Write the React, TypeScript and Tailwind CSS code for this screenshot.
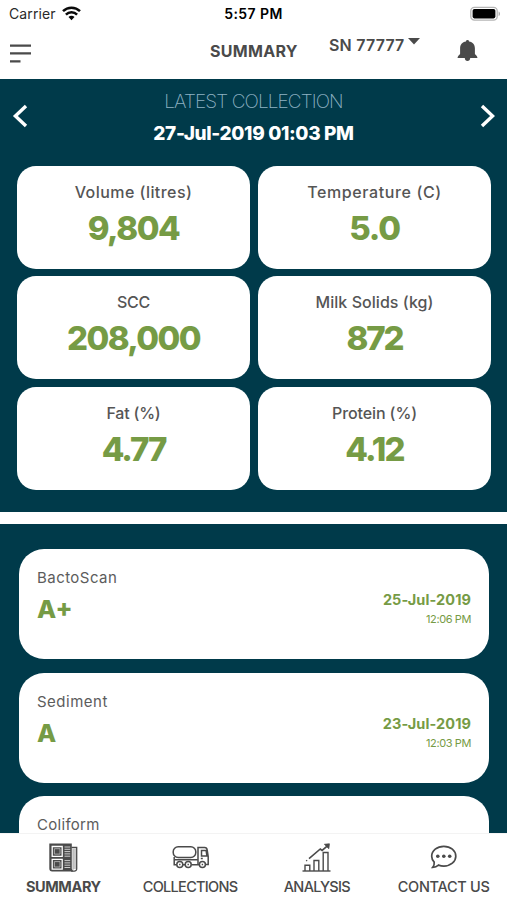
import type { ReactNode } from 'react';

type Metric = { label: string; value: string; labelClass: string; valueClass: string };
type TestResult = { label: string; grade?: string; date?: string; time?: string; labelClass: string };
type Tab = { label: string; icon: ReactNode; className: string };

const metrics: Metric[] = [
  { label: 'Volume (litres)', value: '9,804', labelClass: 'tracking-[0.45px]', valueClass: 'tracking-[-1.5px]' },
  { label: 'Temperature (C)', value: '5.0', labelClass: 'tracking-[0.6px]', valueClass: 'tracking-[-1.3px]' },
  { label: 'SCC', value: '208,000', labelClass: 'tracking-[-0.2px]', valueClass: 'tracking-[-1.6px]' },
  { label: 'Milk Solids (kg)', value: '872', labelClass: 'tracking-[0.05px]', valueClass: 'tracking-[-2.2px]' },
  { label: 'Fat (%)', value: '4.77', labelClass: 'tracking-[-0.2px]', valueClass: 'tracking-[-2px]' },
  { label: 'Protein (%)', value: '4.12', labelClass: 'tracking-[-0.1px]', valueClass: 'tracking-[-1.8px]' },
];

// Coliform has no reading yet, so only its label is shown
const results: TestResult[] = [
  { label: 'BactoScan', grade: 'A+', date: '25-Jul-2019', time: '12:06 PM', labelClass: 'tracking-[0.45px]' },
  { label: 'Sediment', grade: 'A', date: '23-Jul-2019', time: '12:03 PM', labelClass: 'tracking-[0.5px]' },
  { label: 'Coliform', labelClass: 'tracking-[0.3px]' },
];

function WifiIcon() {
  return (
    <svg className="h-[15px] w-[19px]" viewBox="0 0 19 15" fill="none" stroke="#0a0a0a" strokeWidth="2.5">
      <path d="M1 5.200a12.200 12.200 0 0 1 17 0" />
      <path d="M3.900 8.600a7.900 7.900 0 0 1 11.200 0" />
      <path d="M6.500 11.100a4.200 4.200 0 0 1 6 0l-3 3.100z" fill="#0a0a0a" stroke="none" />
    </svg>
  );
}

function BatteryIcon() {
  return (
    <svg className="h-[16px] w-[31px]" viewBox="0 0 31 16">
      <rect x="0.8" y="1.3" width="26.4" height="12.8" rx="3.6" fill="#fff" stroke="#b5b5b5" strokeWidth="1.3" />
      <rect x="2.6" y="3" width="22.8" height="9.4" rx="1.8" fill="#000" />
      <path d="M28.6 5.4c1.8.7 1.8 3.9 0 4.600z" fill="#a8a8a8" />
    </svg>
  );
}

function BellIcon() {
  return (
    <svg className="h-[22px] w-[21px]" viewBox="0 0 21 22" fill="#4a4a4a">
      <path d="M9 1.400a1.500 1.300 0 0 1 3 0C15.900 1.900 17.900 4.600 17.900 8.200v5.600c0 1 2.500 1.700 2.600 4.200H.5c.1-2.500 2.600-3.200 2.600-4.200V8.200c0-3.600 2-6.300 5.900-6.800z" />
      <path d="M7.800 18h5.400c0 1.800-1.200 3-2.700 3s-2.700-1.200-2.700-3z" />
    </svg>
  );
}

function SummaryIcon() {
  return (
    <svg className="h-[29px] w-[29px]" viewBox="0 0 29 29" fill="none">
      <path d="M22.5 4.5h5.2v21.2a2.3 2.3 0 0 1-2.6 2.4h-3" stroke="#4a4a4a" strokeWidth="1.3" />
      <path d="M24.1 6v20.5M26 6v20" stroke="#777" strokeWidth="0.8" />
      <path d="M0.3 0.5h22.5v25.3l1.6 2.700H3.2a2.9 2.9 0 0 1-2.9-2.900z" fill="#4a4a4a" />
      <path d="M3.200 3.500h10v9.800h-10zM3.200 16.400h10v9.800h-10z" stroke="#fff" strokeWidth="1.300" />
      <path d="M5.400 5.700H11v5.400H5.400zM5.400 18.600H11V24H5.400z" stroke="#bbb" strokeWidth="0.8" />
      <path d="M15.500 4h5.700M15.500 6.300h5.700M15.500 8.600h5.700M15.500 10.900h5.700M15.500 13.200h5.700M15.500 17.600h5.700M15.500 19.900h5.700M15.500 22.200h5.700M15.500 24.500h5.700" stroke="#ccc" strokeWidth="1" />
    </svg>
  );
}

function TankerIcon() {
  return (
    <svg className="h-[24px] w-[37px]" viewBox="0 0 37 24" fill="none" stroke="#4a4a4a" strokeWidth="1.500">
      <rect x="1.2" y="1.8" width="22.6" height="10.6" rx="5" />
      <path d="M26 19V2.600h6.700c1.700 0 2.300.9 2.500 2.400l1 6.600v8h-2.400M29.500 5.400h4.600l.8 5.600h-5.400z" />
      <path d="M2.200 12v2.700h23.600M2.200 14.700v5h2.500M11 19.700h2.200M19.500 19.700h7.600M28.800 13.500h2" />
      <circle cx="7.8" cy="19.4" r="3" />
      <circle cx="16.2" cy="19.4" r="3" />
      <circle cx="30.4" cy="19.4" r="3" />
      <path d="M7.100 19.400h1.400M15.500 19.400h1.400M29.700 19.400h1.400" />
    </svg>
  );
}

function AnalysisIcon() {
  return (
    <svg className="h-[29px] w-[29px]" viewBox="0 0 29 29" fill="none" stroke="#4a4a4a" strokeWidth="1.400">
      <path d="M.5 28h28" />
      <path d="M3 28v-5.700h4.800V28M12 28V17.500h4.800V28M21.200 28V9.500H26V28" />
      <path d="M7 15.600 18.300 6l1.800 1.400 5.600-4.800" strokeWidth="1.600" />
      <path d="m4.200 18 .9-.8" />
      <path d="m22.400 1.300 5-.5-.6 4.900z" fill="#4a4a4a" strokeWidth="0.8" />
    </svg>
  );
}

function ChatIcon() {
  return (
    <svg className="h-[24px] w-[27px]" viewBox="0 0 27 24" fill="none" stroke="#4a4a4a" strokeWidth="1.700">
      <path d="M13.800 1.300c6.800 0 12 4.400 12 9.900s-5.200 9.900-12 9.900c-1.900 0-3.700-.4-5.300-1-1.500 1.400-3.500 2.200-5.800 2.200 1.100-1.300 1.800-2.900 1.500-5.100-1.600-1.700-2.500-3.800-2.500-6 0-5.500 5.300-9.900 12.100-9.900z" />
      <g fill="#4a4a4a" stroke="none">
        <circle cx="7.8" cy="11.3" r="1.8" />
        <circle cx="13.8" cy="11.3" r="1.8" />
        <circle cx="19.7" cy="11.3" r="1.8" />
      </g>
    </svg>
  );
}

const tabs: Tab[] = [
  { label: 'SUMMARY', icon: <SummaryIcon />, className: 'font-bold tracking-[-0.4px]' },
  { label: 'COLLECTIONS', icon: <TankerIcon />, className: 'font-medium tracking-[-0.7px]' },
  { label: 'ANALYSIS', icon: <AnalysisIcon />, className: 'font-medium tracking-[-0.7px]' },
  { label: 'CONTACT US', icon: <ChatIcon />, className: 'font-medium tracking-[-0.3px]' },
];

function MetricCard({ metric }: { metric: Metric }) {
  return (
    <div className="h-[103px] rounded-[19px] bg-white pt-[14px] text-center whitespace-nowrap">
      <div className={`text-[16px] leading-6 font-medium text-[#555] ${metric.labelClass}`}>{metric.label}</div>
      <div className={`mt-1 text-[33px] leading-[40px] font-extrabold text-[#769b45] ${metric.valueClass}`}>
        {metric.value}
      </div>
    </div>
  );
}

function ResultCard({ result }: { result: TestResult }) {
  return (
    <div className="flex h-[110px] shrink-0 justify-between rounded-[25px] bg-white px-[18px] whitespace-nowrap">
      <div className="pt-[19px]">
        <div className={`text-[15px] leading-5 text-[#5c5c5c] ${result.labelClass}`}>{result.label}</div>
        {result.grade && (
          <div className="mt-[5px] text-[25px] leading-[32px] font-extrabold text-[#769b45]">{result.grade}</div>
        )}
      </div>
      {result.date && (
        <div className="pt-[41px] text-right text-[#769b45]">
          <div className="text-[14.500px] leading-5 font-bold tracking-[0.1px]">{result.date}</div>
          <div className="mt-[1px] text-[11px] leading-4 tracking-[-0.4px]">{result.time}</div>
        </div>
      )}
    </div>
  );
}

export default function App() {
  return (
    <div className="flex h-[900px] w-[507px] flex-col overflow-hidden bg-white font-['Inter',sans-serif] text-[#4a4a4a]">
      <div className="grid h-[27px] shrink-0 grid-cols-3 items-center pr-[6px] pl-[9px] text-[#2a2a2a]">
        <div className="flex items-center gap-[6px] text-[14px]">
          <span className="tracking-[0.1px]">Carrier</span>
          <WifiIcon />
        </div>
        <div className="pr-[3px] text-center text-[14px] font-semibold tracking-[0.4px] text-black">5:57 PM</div>
        <div className="flex justify-end">
          <BatteryIcon />
        </div>
      </div>

      <header className="flex h-[52px] shrink-0 items-start pl-[10px] whitespace-nowrap">
        <button className="mt-[17px] w-[21px]" aria-label="Menu">
          <svg className="h-[20px] w-[21px]" viewBox="0 0 21 20" fill="#4a4a4a">
            <path d="M0 .4h21v2.300H0zM0 8.300h21v2.300H0zM0 16.200h10.500v2.300H0z" />
          </svg>
        </button>
        <h1 className="mt-3 ml-[179px] w-[89px] text-[16px] leading-6 font-bold tracking-[0.3px]">SUMMARY</h1>
        <button className="mt-[6px] ml-[30px] flex w-[93px] items-center text-[16px] leading-6 font-semibold">
          <span className="w-[79px] text-left tracking-[0.2px]">SN 77777</span>
          <svg className="-mt-[7px] h-[7px] w-[12px]" viewBox="0 0 12 7" fill="#4a4a4a">
            <path d="M0 0h12L6 6.500z" />
          </svg>
        </button>
        <button className="mt-[13px] ml-[35px]" aria-label="Notifications">
          <BellIcon />
        </button>
      </header>

      <section className="h-[433px] shrink-0 bg-[#003a4a] px-[17px] pt-[11px]">
        <div className="-mx-[5px] flex items-center justify-between whitespace-nowrap">
          <svg className="-mt-[6px] h-[24px] w-[16px]" viewBox="0 0 16 24" fill="none" stroke="#fff" strokeWidth="3.400">
            <path d="M14 2 3.400 12 14 22" />
          </svg>
          <div className="text-center">
            <div className="text-[19px] leading-6 font-extralight tracking-[-0.9px] text-[#8fb2c4]">LATEST COLLECTION</div>
            <div className="mt-[6px] text-[19px] leading-7 font-extrabold tracking-[-0.35px] text-white">
              27-Jul-2019 01:03 PM
            </div>
          </div>
          <svg className="-mt-[6px] h-[24px] w-[16px]" viewBox="0 0 16 24" fill="none" stroke="#fff" strokeWidth="3.400">
            <path d="m3 2 10.600 10L3 22" />
          </svg>
        </div>
        <div className="mt-[18px] grid w-[474px] grid-cols-2 gap-x-2 gap-y-[7.400px]">
          {metrics.map((metric) => (
            <MetricCard key={metric.label} metric={metric} />
          ))}
        </div>
      </section>

      <section className="mt-3 flex min-h-0 flex-1 flex-col gap-[13.500px] overflow-hidden bg-[#003a4a] pt-[25px] pr-[18px] pl-[19px]">
        {results.map((result) => (
          <ResultCard key={result.label} result={result} />
        ))}
      </section>

      <nav className="grid h-[67px] shrink-0 grid-cols-4 border-t border-[#f3f3f3] bg-white whitespace-nowrap">
        {tabs.map((tab) => (
          <button key={tab.label} className="flex flex-col items-center">
            <span className="mt-[8px] flex h-[30px] items-center">{tab.icon}</span>
            <span className={`mt-[5px] text-[14.500px] leading-5 ${tab.className}`}>{tab.label}</span>
          </button>
        ))}
      </nav>
    </div>
  );
}
